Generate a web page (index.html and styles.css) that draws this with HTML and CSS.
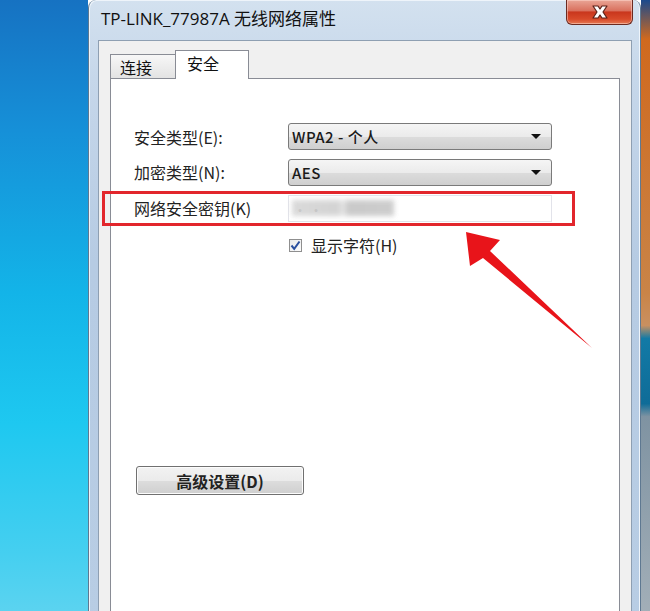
FILE: index.html
```html
<!DOCTYPE html>
<html lang="zh-CN">
<head>
<meta charset="utf-8">
<title>TP-LINK_77987A 无线网络属性</title>
<link rel="stylesheet" href="styles.css">
</head>
<body>
<div class="screen">
  <div class="desk-left"></div>
  <div class="window">
    <div class="titlebar">
      <span class="title">TP-LINK_77987A 无线网络属性</span>
      <button class="close" aria-label="关闭">
        <svg width="22" height="16" viewBox="0 0 22 16"><path d="M4 2 L9 2 L11 5 L13 2 L18 2 L14 8 L18 14 L13 14 L11 11 L9 14 L4 14 L8 8 Z" fill="#fff" stroke="#5a2018" stroke-width="1.2" stroke-linejoin="round"/></svg>
      </button>
    </div>
    <div class="client">
      <div class="tabs">
        <div class="tab">连接</div>
        <div class="tab active">安全</div>
      </div>
      <div class="panel">
        <div class="form">
          <label class="lbl">安全类型(E):</label>
          <div class="select"><span>WPA2 - 个人</span><i class="caret"></i></div>
          <label class="lbl">加密类型(N):</label>
          <div class="select"><span>AES</span><i class="caret"></i></div>
          <label class="lbl">网络安全密钥(K)</label>
          <div class="input"><span class="dots">··</span><span class="blur"></span></div>
          <span></span>
          <div class="check">
            <span class="box"><svg width="11" height="11" viewBox="0 0 11 11"><path d="M1.5 5.5 L4.2 8.8 L9.5 1.5" fill="none" stroke="#2a4f9e" stroke-width="2"/></svg></span>
            <span>显示字符(H)</span>
          </div>
        </div>
        <button class="btn">高级设置(D)</button>
      </div>
    </div>
  </div>
  <div class="desk-right"></div>

  <div class="highlight"></div>
  <svg class="arrow" width="650" height="611" viewBox="0 0 650 611">
    <path d="M466 232 L500 240 L490 251 L592 348 L483 258 L470 266 Z" fill="#e8141a"/>
  </svg>
</div>
</body>
</html>
```

FILE: styles.css
```css
html, body {
  margin: 0;
  padding: 0;
}
body {
  width: 650px;
  height: 611px;
  overflow: hidden;
  font-family: "Noto Sans CJK SC", "Noto Sans", sans-serif;
}
.screen {
  position: relative;
  width: 650px;
  height: 611px;
  display: grid;
  grid-template-columns: 88px 553px 9px;
  overflow: hidden;
}
.desk-left {
  background: linear-gradient(180deg, #1672c2 0%, #1690d8 20%, #13b4e8 45%, #1ec8f0 65%, #45cff0 85%, #6ad6f0 100%);
}
.desk-right {
  background: linear-gradient(180deg, #1b4a8c 0%, #d0691e 6%, #c98447 45%, #c99060 50%, #127aa6 52%, #0f6c98 62%, #7f93a2 64%, #a9b4bc 100%);
}
.window {
  background: linear-gradient(180deg, #d3e1ef 0%, #c6d7ea 12%, #b6cbe3 40%, #b8cde4 100%);
  border-left: 1px solid #5e7891;
  border-right: 1px solid #5e7891;
  border-radius: 8px 8px 0 0;
  padding: 0 8px 0 9px;
  display: flex;
  flex-direction: column;
  box-shadow: inset 1px 1px 0 #eef4fa, inset -1px 0 0 #eef4fa;
}
.titlebar {
  height: 40px;
  display: flex;
  align-items: flex-start;
  justify-content: space-between;
}
.title {
  font-family: "Open Sans", "Noto Sans CJK SC", sans-serif;
  font-size: 17px;
  line-height: 20px;
  color: #111;
  margin: 9px 0 0 3px;
  white-space: nowrap;
}
.close {
  width: 67px;
  height: 25px;
  margin: 0 -1px 0 0;
  padding: 0;
  border: 1px solid #6b2a20;
  border-top: none;
  border-radius: 0 0 6px 6px;
  background: linear-gradient(180deg, #e9a596 0%, #d9705d 45%, #c9361d 50%, #d84a2a 80%, #e57b55 100%);
  box-shadow: inset 0 0 0 1px rgba(255,220,210,0.5);
  display: flex;
  align-items: center;
  justify-content: center;
}
.client {
  flex: 1;
  background: #f0f0f0;
  border: 1px solid #8e9fb2;
  border-bottom: none;
  padding: 9px 11px 0 11px;
  display: flex;
  flex-direction: column;
}
.tabs {
  display: flex;
  align-items: flex-end;
  height: 28px;
  position: relative;
  z-index: 1;
}
.tab {
  height: 24px;
  width: 66px;
  border: 1px solid #898c95;
  border-bottom: none;
  background: linear-gradient(180deg, #f7f7f7, #e3e3e3);
  font-size: 16px;
  line-height: 24px;
  padding-left: 9px;
  box-sizing: border-box;
  color: #111;
}
.tab.active {
  height: 29px;
  width: 74px;
  background: #fff;
  border-left: 1px solid #898c95;
  margin-left: -1px;
  margin-bottom: -1px;
  padding-left: 11px;
  line-height: 24px;
}
.panel {
  height: 527px;
  background: #fff;
  border: 1px solid #898c95;
  padding: 44px 0 0 23px;
}
.form {
  display: grid;
  grid-template-columns: 154px 264px;
  grid-template-rows: 27px 26px 27px 16px;
  row-gap: 9px;
  align-items: center;
}
.form .input { margin-top: 1px; }
.lbl {
  font-size: 16px;
  line-height: 20px;
  color: #222;
  white-space: nowrap;
}
.select {
  height: 27px;
  box-sizing: border-box;
  border: 1px solid #7a7a7a;
  border-radius: 3px;
  background: linear-gradient(180deg, #f5f5f5 0%, #ebebeb 50%, #dcdcdc 51%, #cfcfcf 100%);
  display: flex;
  align-items: center;
  justify-content: space-between;
  padding: 0 10px 0 3px;
  font-size: 15px;
  font-weight: 500;
  color: #1a1a1a;
  letter-spacing: 0.5px;
}
.caret {
  width: 0;
  height: 0;
  border-left: 5px solid transparent;
  border-right: 5px solid transparent;
  border-top: 5px solid #111;
}
.input {
  height: 27px;
  width: 264px;
  box-sizing: border-box;
  border: 1px solid #e2e3ea;
  background: #fff;
  position: relative;
  display: flex;
  align-items: center;
  padding-left: 3px;
}
.dots {
  position: absolute;
  left: 4px;
  top: 6px;
  font-size: 14px;
  line-height: 14px;
  color: #666;
  letter-spacing: 2px;
}
.blur {
  width: 102px;
  height: 16px;
  background: linear-gradient(90deg, #d6d6d6 0%, #cfcfcf 45%, #e4e4e4 50%, #c4c4c4 55%, #c8c8c8 100%);
  filter: blur(2.5px);
  opacity: 0.9;
}
.check {
  align-self: start;
  margin-top: 6px;
  display: flex;
  align-items: center;
  gap: 9px;
  font-size: 16px;
  line-height: 18px;
  color: #222;
  margin-left: 1px;
}
.box {
  width: 13px;
  height: 13px;
  box-sizing: border-box;
  border: 1px solid #8f8f8f;
  background: linear-gradient(135deg, #e9e9e9, #fcfcfc);
  display: flex;
  align-items: center;
  justify-content: center;
}
.btn {
  display: block;
  margin: 220px 0 0 2px;
  width: 168px;
  height: 29px;
  border: 1px solid #707070;
  border-radius: 3px;
  background: linear-gradient(180deg, #f2f2f2 0%, #ebebeb 50%, #dddddd 51%, #cfcfcf 100%);
  box-shadow: inset 0 0 0 1px #fcfcfc;
  font-family: "Noto Sans CJK SC", sans-serif;
  font-size: 16px;
  font-weight: 700;
  color: #222;
  padding: 0;
}
.highlight {
  position: absolute;
  left: 102px;
  top: 191px;
  width: 473px;
  height: 35px;
  box-sizing: border-box;
  border: 3px solid #e2262c;
  pointer-events: none;
}
.arrow {
  position: absolute;
  left: 0;
  top: 0;
  pointer-events: none;
}
```
